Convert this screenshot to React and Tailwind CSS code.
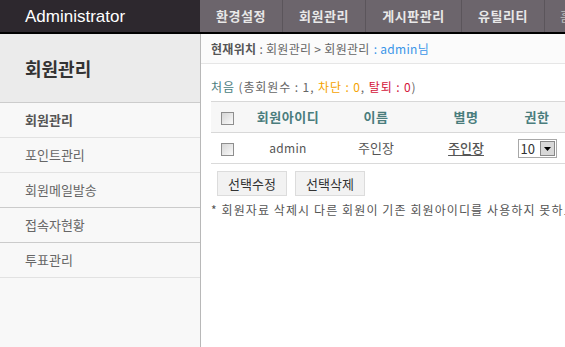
import { useState } from "react"

const NAV = [
  { label: "환경설정", w: "w-[83px]" },
  { label: "회원관리", w: "w-[83px]" },
  { label: "게시판관리", w: "w-[96px]" },
  { label: "유틸리티", w: "w-[83px]" },
]

const MENU = [
  { label: "회원관리", active: true, border: "border-[#e2e2e2]" },
  { label: "포인트관리", border: "border-[#e2e2e2]" },
  { label: "회원메일발송", border: "border-[#cbcbcb]" },
  { label: "접속자현황", border: "border-[#cbcbcb]" },
  { label: "투표관리", border: "border-[#e2e2e2]" },
]

const FONT = { fontFamily: '"Noto Sans CJK KR", "Noto Sans", sans-serif' }

export default function App() {
  const [level, setLevel] = useState("10")

  return (
    <div className="w-[565px] h-[347px] overflow-hidden bg-white" style={FONT}>
      <div className="w-[900px] h-full flex flex-col">
        {/* ── Top bar ── */}
        <div className="h-[34px] flex border-b-2 border-black shrink-0">
          <div className="w-[200px] bg-[#2d282e] flex items-center pl-[25px]">
            <span
              className="text-white text-[17px] leading-none"
              style={{ fontFamily: '"Liberation Sans", Arial, sans-serif' }}
            >
              Administrator
            </span>
          </div>
          <div className="flex-1 flex bg-[#6c656c]">
            {NAV.map((n) => (
              <div
                key={n.label}
                className={`${n.w} border-r border-[#5b555b] flex items-center justify-center text-[13px] font-bold tracking-[0.5px] text-[#e8e8e8]`}
              >
                {n.label}
              </div>
            ))}
            <div className="pl-[15px] flex items-center text-[13px] text-[#bdbdbd]">홈</div>
          </div>
        </div>

        <div className="flex flex-1">
          {/* ── Sidebar ── */}
          <div className="w-[201px] shrink-0 bg-[#f8f8f8] border-r border-[#b8b8b8]">
            <div className="h-[69px] bg-[#ebebeb] border-b border-[#cccccc] flex items-center pl-[25px] text-[18px] font-semibold text-[#333]">
              회원관리
            </div>
            {MENU.map((m) => (
              <div
                key={m.label}
                className={`h-[35px] border-b ${m.border} flex items-center pl-[25px] text-[13px] ${
                  m.active ? "font-bold text-[#555]" : "text-[#666]"
                }`}
              >
                {m.label}
              </div>
            ))}
          </div>

          {/* ── Main ── */}
          <div className="flex-1">
            <div className="h-[30px] border-b border-[#e6e6e6] bg-[#fbfbfb] flex items-center pl-[10px] text-[12px] tracking-[0.3px] text-[#666]">
              <span className="font-bold text-[#555]">현재위치</span>
              <span className="ml-[3px]">: 회원관리 &gt; 회원관리</span>
              <span className="ml-[4px] text-[#3a95e8]">: admin님</span>
            </div>

            <div className="pl-[10px]">
              <p className="mt-[14px] text-[12px] tracking-[0.9px] text-[#666]">
                <span className="text-[#4a7d7d]">처음</span> (총회원수 : 1,{" "}
                <span className="text-[#f5a300]">차단 : 0</span>,{" "}
                <span className="text-[#d4143a]">탈퇴 : 0</span>)
              </p>

              <table className="mt-[5px] w-[500px] border-collapse text-[13px] table-fixed">
                <colgroup>
                  <col className="w-[32px]" />
                  <col className="w-[90px]" />
                  <col className="w-[86px]" />
                  <col className="w-[94px]" />
                  <col className="w-[48px]" />
                  <col />
                </colgroup>
                <thead>
                  <tr className="h-[31px] bg-[#f7f7f7] border-t border-b border-[#d8d8d8] text-[#4a7d7d]">
                    <th className="font-bold">
                      <Check />
                    </th>
                    <th className="font-bold tracking-[0.5px]">회원아이디</th>
                    <th className="font-bold tracking-[0.5px]">이름</th>
                    <th className="font-bold tracking-[0.5px]">별명</th>
                    <th className="font-bold tracking-[0.5px]">권한</th>
                    <th />
                  </tr>
                </thead>
                <tbody>
                  <tr className="h-[31px] border-b border-[#dadada] text-[#555] text-center">
                    <td>
                      <Check />
                    </td>
                    <td className="text-[12px] tracking-[0.3px]">admin</td>
                    <td>주인장</td>
                    <td>
                      <span className="underline underline-offset-2 font-medium text-[#555]">주인장</span>
                    </td>
                    <td>
                      <div className="inline-flex items-center h-[19px] w-[39px] border border-[#a8a8a8] bg-white align-middle">
                        <span className="flex-1 text-left pl-[2px] text-[13px] text-[#333] leading-none">
                          {level}
                        </span>
                        <button
                          onClick={() => setLevel(level === "10" ? "1" : "10")}
                          className="w-[15px] h-[15px] mr-[1px] bg-[#d8d8d8] border border-[#888] flex items-center justify-center"
                        >
                          <svg width="7" height="4" viewBox="0 0 7 4">
                            <path d="M0 0h7L3.5 4z" fill="#000" />
                          </svg>
                        </button>
                      </div>
                    </td>
                    <td />
                  </tr>
                </tbody>
              </table>

              <div className="flex gap-[8px] mt-[7px] pl-[6px]">
                <button className="w-[70px] h-[25px] bg-[#f2f2f2] border border-[#dcdcdc] text-[13px] text-[#333]">
                  선택수정
                </button>
                <button className="w-[70px] h-[25px] bg-[#f2f2f2] border border-[#dcdcdc] text-[13px] text-[#333]">
                  선택삭제
                </button>
              </div>

              <p className="mt-[5px] text-[12px] tracking-[1.1px] text-[#555] whitespace-nowrap">
                * 회원자료 삭제시 다른 회원이 기존 회원아이디를 사용하지 못하도록 회원아이디, 이름, 별명은 삭제하지 않고 영구 보관합니다.
              </p>
            </div>
          </div>
        </div>
      </div>
    </div>
  )
}

function Check() {
  return (
    <span className="inline-block align-middle w-[13px] h-[13px] border border-[#8e8e8e] bg-gradient-to-br from-[#d6d6d6] to-[#fafafa]" />
  )
}
